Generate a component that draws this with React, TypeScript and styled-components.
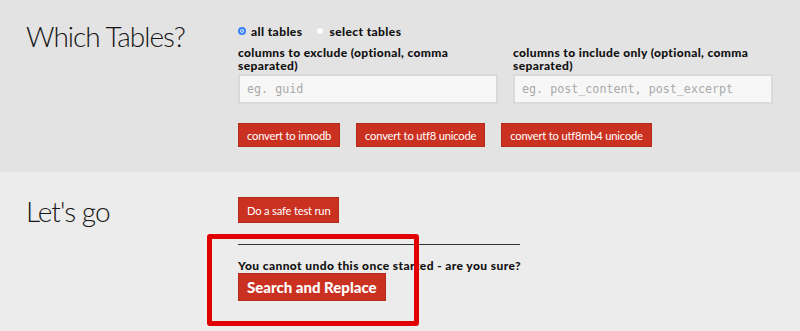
import React, { useState } from "react";
import styled, { createGlobalStyle } from "styled-components";

const GlobalStyle = createGlobalStyle`
  html, body {
    margin: 0;
    padding: 0;
    background: #ececec;
    font-family: "Lato", "Liberation Sans", sans-serif;
    color: #111;
  }
`;

const Section = styled.section<{ $tone: "dark" | "light"; $bottom?: number }>`
  position: relative;
  display: flex;
  background: ${({ $tone }) => ($tone === "dark" ? "#e3e3e3" : "#ececec")};
  padding: 24px 0 ${({ $bottom }) => $bottom ?? 25}px 26px;
`;

const Heading = styled.h2<{ $top: number }>`
  flex: 0 0 212px;
  margin: ${({ $top }) => $top}px 0 0;
  font-family: "Lato", sans-serif;
  font-weight: 300;
  font-size: 28px;
  line-height: 28px;
  letter-spacing: -1px;
  color: #151515;
`;

const Body = styled.div`
  display: flex;
  flex-direction: column;
`;

const RadioRow = styled.div`
  display: flex;
  gap: 14px;
  height: 14px;
  align-items: center;
`;

const RadioLabel = styled.label`
  display: flex;
  align-items: center;
  gap: 5px;
  font-size: 12px;
  font-weight: 900;
  letter-spacing: 0.4px;
  cursor: pointer;
`;

const RadioDot = styled.span<{ $checked: boolean }>`
  width: 8px;
  height: 8px;
  border-radius: 50%;
  box-sizing: border-box;
  background: ${({ $checked }) => ($checked ? "#3b82f6" : "#fff")};
  border: ${({ $checked }) => ($checked ? "2px solid #3b82f6" : "1px solid #e2e2e2")};
  box-shadow: ${({ $checked }) => ($checked ? "inset 0 0 0 1px #fff" : "none")};
`;

const Fields = styled.div`
  display: flex;
  gap: 15px;
  margin-top: 8px;
`;

const Field = styled.div`
  width: 260px;
  display: flex;
  flex-direction: column;
`;

const FieldLabel = styled.label`
  height: 28px;
  font-size: 12px;
  font-weight: 900;
  letter-spacing: 0.35px;
  line-height: 13px;
`;

const TextInput = styled.input`
  box-sizing: border-box;
  width: 260px;
  height: 30px;
  padding: 0 7px;
  border: 2px solid #dadada;
  background: #f7f7f7;
  font-family: "DejaVu Sans Mono", "Liberation Mono", monospace;
  font-size: 11.7px;
  color: #333;
  outline: none;

  &::placeholder {
    color: #a9a9a9;
  }
`;

const ButtonRow = styled.div`
  display: flex;
  gap: 16px;
  margin-top: 19px;
`;

const Button = styled.button<{ $big?: boolean; $tall?: boolean }>`
  box-sizing: border-box;
  height: ${({ $big, $tall }) => ($big ? 28 : $tall ? 26 : 24)}px;
  padding: 0 8px;
  background: #cb3121;
  border: 1px solid #b52b1d;
  color: #fff;
  font-family: "Lato", sans-serif;
  font-size: ${({ $big }) => ($big ? 15 : 11.2)}px;
  font-weight: ${({ $big }) => ($big ? 900 : 400)};
  letter-spacing: ${({ $big }) => ($big ? 0 : -0.2)}px;
  cursor: pointer;
  align-self: flex-start;
`;

const Rule = styled.hr`
  width: 282px;
  margin: 21px 0 0;
  border: none;
  border-top: 1px solid #333;
`;

const Warning = styled.p`
  margin: 15px 0 0;
  font-size: 12px;
  font-weight: 900;
  letter-spacing: 0.4px;
  line-height: 12px;
`;

const Highlight = styled.div`
  position: absolute;
  left: 207px;
  top: 62px;
  width: 212px;
  height: 92px;
  box-sizing: border-box;
  border: 5px solid #e00000;
  border-radius: 3px;
  pointer-events: none;
`;

export default function App() {
  const [scope, setScope] = useState<"all" | "select">("all");

  return (
    <>
      <GlobalStyle />
      <Section $tone="dark">
        <Heading $top={-2}>Which Tables?</Heading>
        <Body>
          <RadioRow>
            <RadioLabel onClick={() => setScope("all")}>
              <RadioDot $checked={scope === "all"} />
              all tables
            </RadioLabel>
            <RadioLabel onClick={() => setScope("select")}>
              <RadioDot $checked={scope === "select"} />
              select tables
            </RadioLabel>
          </RadioRow>
          <Fields>
            <Field>
              <FieldLabel>columns to exclude (optional, comma separated)</FieldLabel>
              <TextInput placeholder="eg. guid" />
            </Field>
            <Field>
              <FieldLabel>columns to include only (optional, comma separated)</FieldLabel>
              <TextInput placeholder="eg. post_content, post_excerpt" />
            </Field>
          </Fields>
          <ButtonRow>
            <Button>convert to innodb</Button>
            <Button>convert to utf8 unicode</Button>
            <Button>convert to utf8mb4 unicode</Button>
          </ButtonRow>
        </Body>
      </Section>
      <Section $tone="light" $bottom={30}>
        <Heading $top={1}>Let's go</Heading>
        <Body>
          <Button $tall style={{ marginTop: 1 }}>Do a safe test run</Button>
          <Rule />
          <Warning>You cannot undo this once started - are you sure?</Warning>
          <Button $big style={{ marginTop: 1 }}>Search and Replace</Button>
        </Body>
        <Highlight />
      </Section>
    </>
  );
}
